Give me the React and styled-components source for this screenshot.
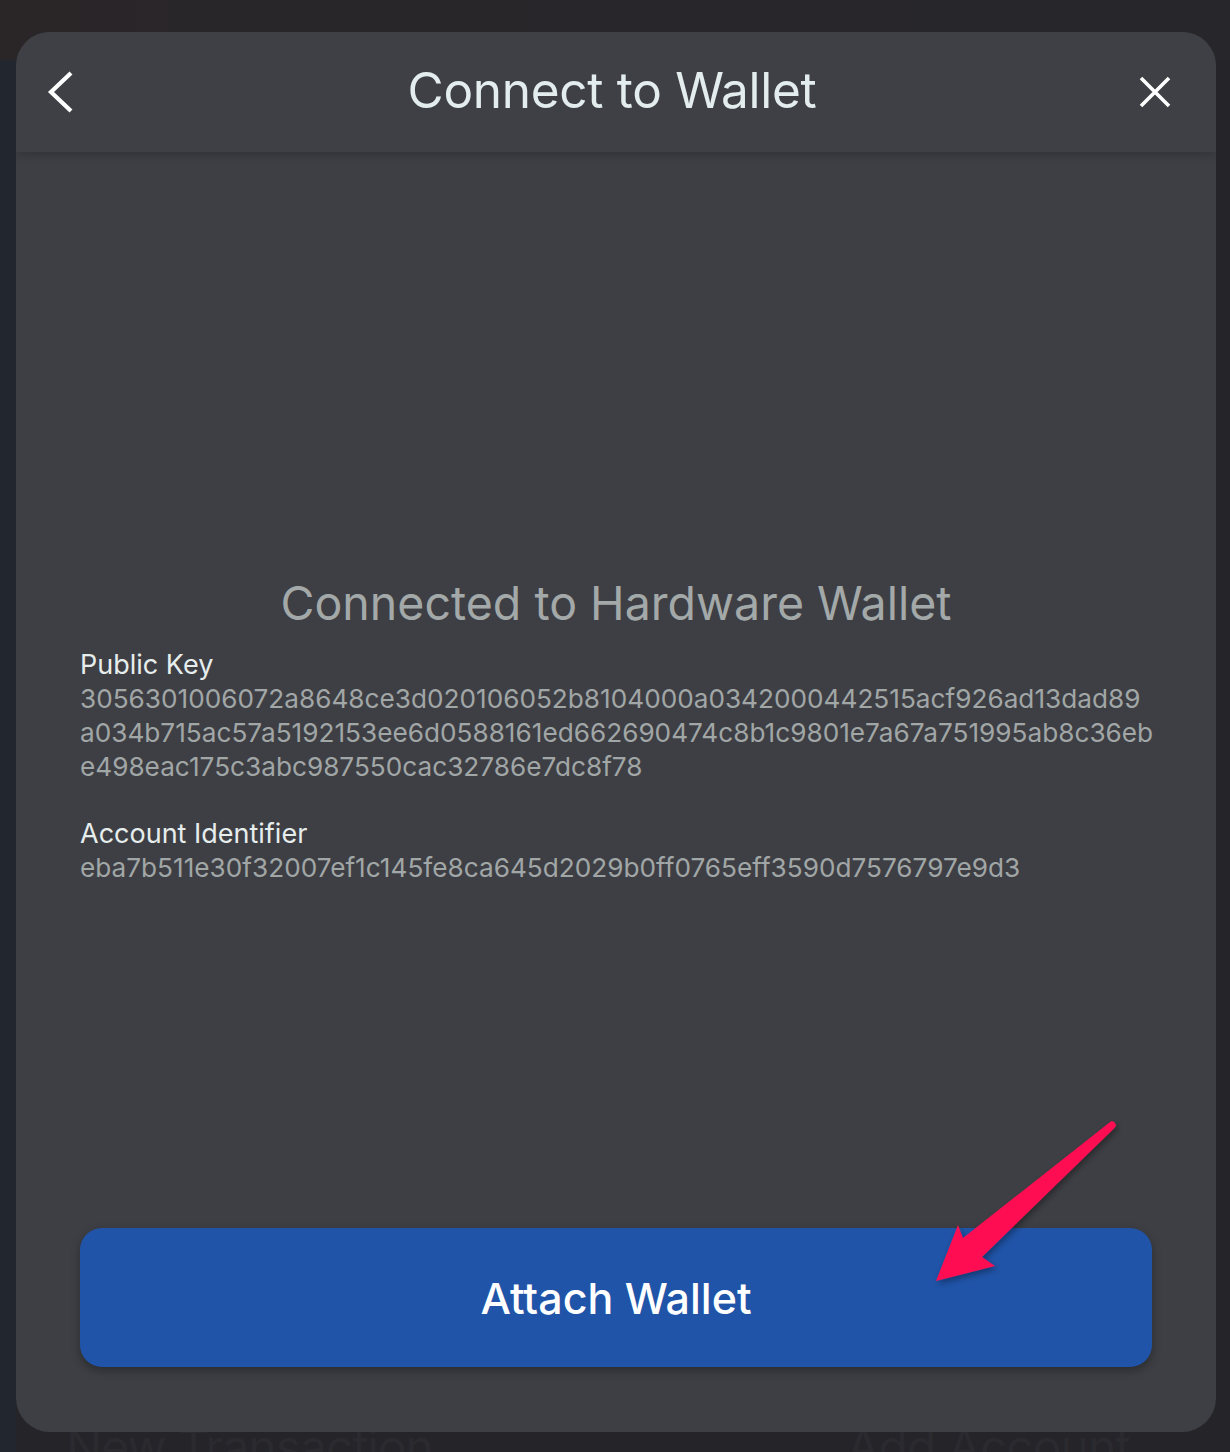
import React from 'react';
import styled, { createGlobalStyle } from 'styled-components';

const GlobalStyle = createGlobalStyle`
  html, body {
    margin: 0;
    padding: 0;
    background: #252429;
  }
  body {
    font-family: Inter, "Noto Sans", sans-serif;
    -webkit-font-smoothing: antialiased;
  }
  * {
    box-sizing: border-box;
  }
`;

const Screen = styled.div`
  position: relative;
  width: 1230px;
  height: 1452px;
  overflow: hidden;
  background: #252429;
`;

const BackApp = styled.div`
  display: flex;
  flex-direction: column;
  height: 100%;
`;

const TopBar = styled.div`
  height: 60px;
  background: linear-gradient(90deg, #2a2628 0%, #28262b 60%, #26262b 100%);
`;

const BackBody = styled.div`
  flex: 1;
  display: flex;
`;

const SideStrip = styled.div`
  width: 16px;
  background: #22262e;
`;

const BackMain = styled.div`
  flex: 1;
  display: flex;
  flex-direction: column;
  justify-content: flex-end;
  background: #242429;
`;

const BackActions = styled.div`
  display: flex;
  justify-content: space-between;
  padding: 0 100px 0 50px;
  height: 40px;
  overflow: hidden;
`;

const GhostText = styled.span`
  font-size: 48px;
  line-height: 70px;
  letter-spacing: -1px;
  color: #2a2a2f;
`;

const Overlay = styled.div`
  position: absolute;
  inset: 0;
  padding: 32px 14px 20px 16px;
`;

const Modal = styled.div`
  width: 1200px;
  height: 1400px;
  background: #3e3f44;
  border-radius: 34px;
  display: flex;
  flex-direction: column;
  overflow: hidden;
`;

const Header = styled.header`
  position: relative;
  z-index: 1;
  height: 120px;
  flex-shrink: 0;
  display: grid;
  grid-template-columns: 1fr auto 1fr;
  align-items: center;
  padding: 0 36px 0 20px;
  background: #3f4045;
  box-shadow: 0 2px 10px rgba(0, 0, 0, 0.22);
`;

const IconButton = styled.button`
  width: 50px;
  height: 50px;
  padding: 0;
  border: none;
  background: none;
  display: flex;
  align-items: center;
  justify-content: center;
  justify-self: ${(p) => (p.$end ? 'end' : 'start')};
  color: #ffffff;
  cursor: pointer;
`;

const Title = styled.h1`
  margin: 0 0 4px 8px;
  font-size: 49.5px;
  font-weight: 400;
  color: #e3eded;
  letter-spacing: -0.3px;
`;

const Body = styled.div`
  flex: 1;
  display: flex;
  flex-direction: column;
  padding: 0 64px 65px;
`;

const Info = styled.section`
  flex: 1;
  display: flex;
  flex-direction: column;
  padding-top: 421px;
`;

const Heading = styled.h2`
  margin: 0 0 15px;
  text-align: center;
  font-size: 46.5px;
  line-height: 60px;
  font-weight: 400;
  color: #a3a8a8;
`;

const Field = styled.div`
  display: flex;
  flex-direction: column;
  margin-bottom: 33px;
`;

const Label = styled.div`
  font-size: 27px;
  line-height: 34px;
  color: #e6eded;
`;

const Value = styled.div`
  font-size: 26.2px;
  line-height: 34px;
  color: #a1a6a6;
  white-space: nowrap;
`;

const AttachButton = styled.button`
  height: 139px;
  width: 100%;
  border: none;
  border-radius: 22px;
  background: #2054a8;
  color: #ffffff;
  font-family: Inter, "Noto Sans", sans-serif;
  font-size: 43px;
  font-weight: 500;
  box-shadow: 0 4px 10px rgba(0, 0, 0, 0.3);
  cursor: pointer;
`;

const ArrowLayer = styled.svg`
  position: absolute;
  left: 0;
  top: 0;
  pointer-events: none;
`;

const publicKey = [
  '3056301006072a8648ce3d020106052b8104000a0342000442515acf926ad13dad89',
  'a034b715ac57a5192153ee6d0588161ed662690474c8b1c9801e7a67a751995ab8c36eb',
  'e498eac175c3abc987550cac32786e7dc8f78',
];

const accountId = 'eba7b511e30f32007ef1c145fe8ca645d2029b0ff0765eff3590d7576797e9d3';

const App = () => (
  <Screen>
    <GlobalStyle />
    <BackApp>
      <TopBar />
      <BackBody>
        <SideStrip />
        <BackMain>
          <BackActions>
            <GhostText>New Transaction</GhostText>
            <GhostText>Add Account</GhostText>
          </BackActions>
        </BackMain>
      </BackBody>
    </BackApp>

    <Overlay>
      <Modal>
        <Header>
          <IconButton aria-label="Back">
            <svg width="28" height="42" viewBox="0 0 28 42">
              <path d="M24 2 L4 21 L24 40" fill="none" stroke="#fff" strokeWidth="4.2" />
            </svg>
          </IconButton>
          <Title>Connect to Wallet</Title>
          <IconButton $end aria-label="Close">
            <svg width="32" height="32" viewBox="0 0 32 32">
              <path d="M2 2 L30 30 M30 2 L2 30" fill="none" stroke="#fff" strokeWidth="3.6" />
            </svg>
          </IconButton>
        </Header>
        <Body>
          <Info>
            <Heading>Connected to Hardware Wallet</Heading>
            <Field>
              <Label>Public Key</Label>
              {publicKey.map((line) => (
                <Value key={line}>{line}</Value>
              ))}
            </Field>
            <Field>
              <Label>Account Identifier</Label>
              <Value>{accountId}</Value>
            </Field>
          </Info>
          <AttachButton>Attach Wallet</AttachButton>
        </Body>
      </Modal>
    </Overlay>

    <ArrowLayer width="1230" height="1452" viewBox="0 0 1230 1452">
      <defs>
        <filter id="arrowShadow" x="-20%" y="-20%" width="140%" height="140%">
          <feDropShadow dx="2" dy="3" stdDeviation="3" floodColor="#000" floodOpacity="0.35" />
        </filter>
      </defs>
      <path
        d="M1109.5 1122.5 L963 1238 L958 1225 L936 1281 L995 1266 L982 1257 L1114.5 1128 A3.5 3.5 0 0 0 1109.5 1122.5 Z"
        fill="#ff1052"
        filter="url(#arrowShadow)"
      />
    </ArrowLayer>
  </Screen>
);

export default App;
